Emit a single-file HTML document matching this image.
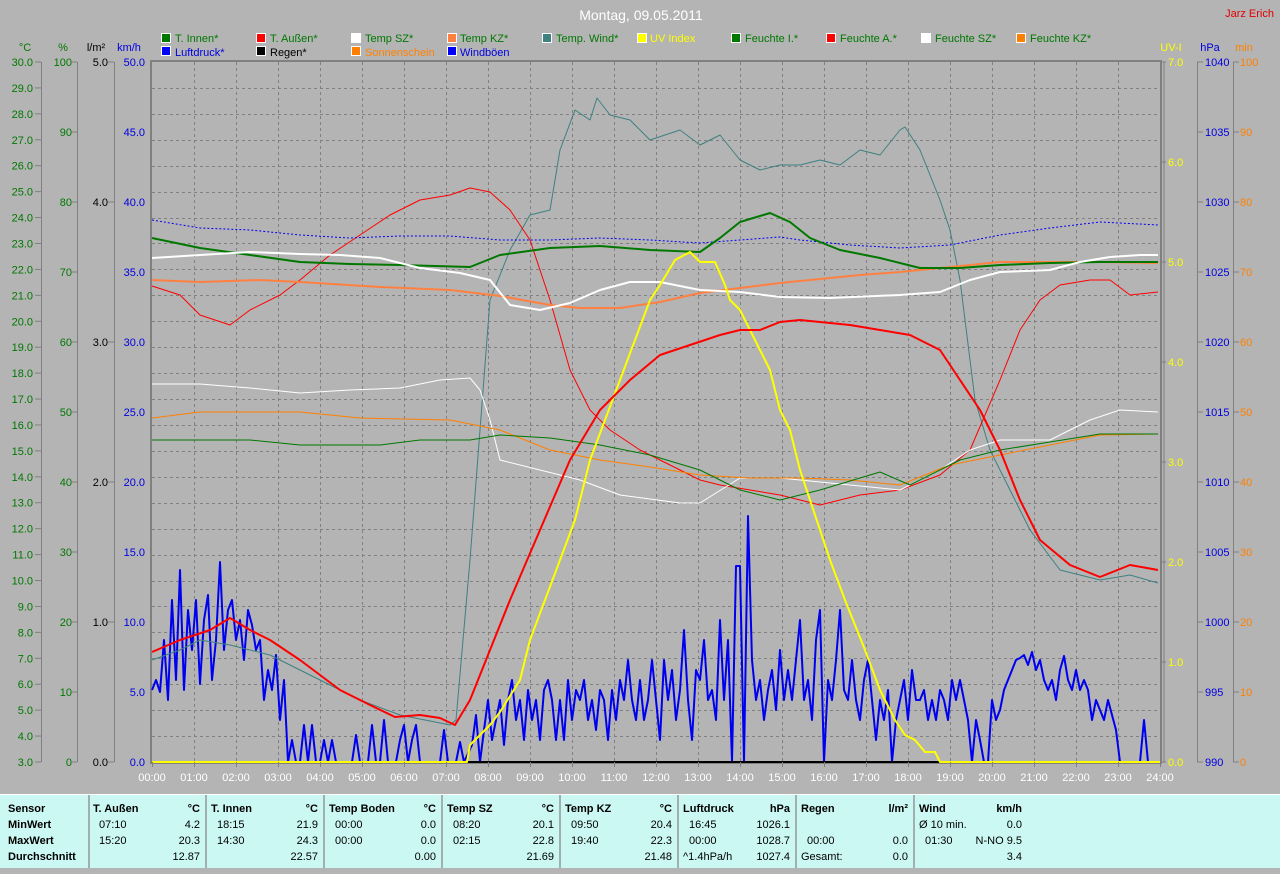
<!DOCTYPE html>
<html><head><meta charset="utf-8"><style>
body{margin:0;background:#b4b4b4;width:1280px;height:867px;overflow:hidden;font-family:"Liberation Sans",sans-serif}
svg{position:absolute;left:0;top:0}
svg text{font-family:"Liberation Sans",sans-serif;font-size:11px}
.tbl{position:absolute;left:0;top:794px;width:1280px;height:73px;background:#ccf8f4;border-top:1px solid #fff}
.c{position:absolute;top:0;height:73px;font-size:11px;line-height:16px;color:#000}
.c div{position:relative;height:16px}
.c .b{font-weight:bold}
.sep{position:absolute;top:0;width:2px;height:73px;background:#a0b0b0}
</style></head><body>
<svg width="1280" height="794" viewBox="0 0 1280 794">
<rect x="0" y="0" width="1280" height="794" fill="#b4b4b4"/>
<text x="641" y="20" fill="#fff" font-size="14" text-anchor="middle" style="font-size:14px">Montag, 09.05.2011</text>
<text x="1274" y="17" fill="#e00000" text-anchor="end">Jarz Erich</text>
<!-- legend -->
<g stroke="#fff" stroke-width="1">
<rect x="161.5" y="33.5" width="9" height="9" fill="#007800"/><rect x="256.5" y="33.5" width="9" height="9" fill="#f00"/><rect x="351.5" y="33.5" width="9" height="9" fill="#fff"/><rect x="447.5" y="33.5" width="9" height="9" fill="#ff8040"/><rect x="542.5" y="33.5" width="9" height="9" fill="#3f8080"/><rect x="637.5" y="33.5" width="9" height="9" fill="#ff0"/><rect x="731.5" y="33.5" width="9" height="9" fill="#007800"/><rect x="826.5" y="33.5" width="9" height="9" fill="#f00"/><rect x="921.5" y="33.5" width="9" height="9" fill="#fff"/><rect x="1016.5" y="33.5" width="9" height="9" fill="#ff8000"/>
<rect x="161.5" y="46.5" width="9" height="9" fill="#00f"/><rect x="256.5" y="46.5" width="9" height="9" fill="#000"/><rect x="351.5" y="46.5" width="9" height="9" fill="#ff8000"/><rect x="447.5" y="46.5" width="9" height="9" fill="#00f"/>
</g>
<g>
<text x="175" y="42" fill="#007800">T. Innen*</text><text x="270" y="42" fill="#007800">T. Außen*</text><text x="365" y="42" fill="#007800">Temp SZ*</text><text x="460" y="42" fill="#007800">Temp KZ*</text><text x="556" y="42" fill="#007800">Temp. Wind*</text><text x="650" y="42" fill="#ff0">UV Index</text><text x="745" y="42" fill="#007800">Feuchte I.*</text><text x="840" y="42" fill="#007800">Feuchte A.*</text><text x="935" y="42" fill="#007800">Feuchte SZ*</text><text x="1030" y="42" fill="#007800">Feuchte KZ*</text>
<text x="175" y="56" fill="#0000e0">Luftdruck*</text><text x="270" y="56" fill="#000">Regen*</text><text x="365" y="56" fill="#ff8000">Sonnenschein</text><text x="460" y="56" fill="#0000e0">Windböen</text>
</g>
<!-- units -->
<text x="25" y="51" fill="#007800" text-anchor="middle">°C</text><text x="63" y="51" fill="#007800" text-anchor="middle">%</text><text x="96" y="51" fill="#000" text-anchor="middle">l/m²</text><text x="129" y="51" fill="#0000e0" text-anchor="middle">km/h</text>
<text x="1171" y="51" fill="#ff0" text-anchor="middle">UV-I</text><text x="1210" y="51" fill="#0000e0" text-anchor="middle">hPa</text><text x="1244" y="51" fill="#ff8000" text-anchor="middle">min</text>
<!-- axis lines -->
<g stroke="#808080" stroke-width="1">
<line x1="41.5" y1="62" x2="41.5" y2="762"/><line x1="77.5" y1="62" x2="77.5" y2="762"/><line x1="114.5" y1="62" x2="114.5" y2="762"/>
<line x1="1197.5" y1="62" x2="1197.5" y2="762"/><line x1="1233.5" y1="62" x2="1233.5" y2="762"/>
</g>
<g id="grid" stroke="#808080" stroke-dasharray="3,3" stroke-width="1"></g>
<rect x="151" y="61" width="1010" height="702" fill="none" stroke="#808080" stroke-width="2"/>
<line x1="1164" y1="62" x2="1164" y2="762" stroke="#808080"/>
<g id="ax"></g>
<g fill="none" stroke-linejoin="round">
<polyline id="wind" stroke="#0000f0" stroke-width="2" points="152,690 156,680 160,692 164,640 168,700 172,600 176,680 180,570 184,690 188,610 192,650 196,600 200,684 204,620 208,595 212,680 216,640 220,562 224,650 228,610 232,600 236,640 240,620 244,660 248,610 252,625 256,650 260,640 264,700 268,670 272,690 276,655 280,720 284,680 288,762 292,740 296,762 300,762 304,725 308,762 312,725 316,762 320,762 324,740 328,762 332,740 336,762 352,762 356,735 360,762 368,762 372,725 376,762 380,762 384,720 388,762 396,762 400,740 404,725 408,762 412,740 416,725 420,762 440,762 444,730 448,762 456,762 460,742 464,762 472,745 476,715 480,762 484,730 488,700 492,740 496,720 500,700 504,745 508,700 512,680 516,720 520,700 524,740 528,690 532,720 536,700 540,740 544,690 548,680 552,700 556,740 560,700 564,740 568,680 572,720 576,690 580,700 584,680 588,720 592,700 596,730 600,690 604,700 608,740 612,690 616,720 620,680 624,700 628,660 632,700 636,720 640,680 644,720 648,700 652,660 656,700 660,740 664,660 668,700 672,670 676,720 680,690 684,630 688,700 692,740 696,670 700,680 704,640 708,700 712,690 716,720 720,620 724,700 728,640 732,762 736,566 740,566 744,762 748,516 752,660 756,700 760,680 764,720 768,690 772,670 776,710 780,650 784,700 788,670 792,700 796,660 800,620 804,700 808,680 812,720 816,640 820,610 824,762 828,680 832,700 836,660 840,610 844,690 848,700 852,660 856,700 860,720 864,680 868,660 872,700 876,740 880,700 884,720 888,690 892,762 896,720 900,700 904,680 908,720 912,670 916,700 920,700 924,690 928,720 932,700 936,720 940,690 944,700 948,720 952,680 956,700 960,680 964,700 968,720 972,762 976,720 980,740 984,762 988,762 992,700 996,720 1000,710 1004,690 1008,680 1012,670 1016,660 1020,658 1024,655 1028,665 1032,652 1036,670 1040,660 1044,680 1048,690 1052,680 1056,700 1060,670 1064,656 1068,680 1072,690 1076,670 1080,690 1084,680 1088,690 1092,720 1096,700 1100,710 1104,720 1108,700 1112,715 1116,730 1120,762 1140,762 1144,720 1148,762"/>
<polyline stroke="#000" stroke-width="2" points="460,762 1160,762"/>
<polyline stroke="#3f8080" stroke-width="1" points="152,660 180,650 200,640 230,645 270,655 320,680 360,700 400,715 450,725 456,720 470,560 490,300 510,250 530,215 550,210 560,150 575,110 590,120 597,98 610,115 630,120 650,140 665,135 680,130 700,145 720,135 740,160 760,170 780,165 800,165 820,160 840,165 860,150 880,155 900,130 905,127 920,150 940,200 950,230 960,280 975,400 990,450 1010,490 1030,530 1060,570 1100,580 1130,575 1158,583"/>
<polyline stroke="#f00" stroke-width="1" points="152,286 180,295 200,315 230,325 250,310 280,295 300,280 330,255 360,235 390,215 420,200 450,195 470,188 490,192 510,210 530,240 550,300 570,370 590,410 610,430 640,450 680,470 700,480 720,485 750,490 780,495 800,500 820,505 840,500 860,495 900,490 940,475 970,450 1000,380 1020,330 1040,300 1060,285 1090,280 1110,280 1130,295 1158,292"/>
<polyline stroke="#fff" stroke-width="1" points="152,384 200,384 250,388 300,393 350,390 400,388 440,380 470,378 480,390 490,420 500,460 540,470 580,480 620,495 680,503 700,503 740,478 780,478 800,480 850,485 900,490 940,470 970,450 1000,440 1050,440 1090,420 1120,410 1158,412"/>
<polyline stroke="#ff8000" stroke-width="1" points="152,418 200,412 300,412 360,418 450,420 500,430 550,450 600,460 650,467 700,475 750,478 800,478 850,480 900,485 950,465 1000,455 1050,445 1100,435 1158,434"/>
<polyline stroke="#007800" stroke-width="1" points="152,440 250,440 300,445 380,445 420,440 470,440 500,435 550,438 600,445 650,455 700,470 740,490 780,500 820,490 880,472 910,485 960,460 1000,450 1050,442 1100,434 1158,434"/>
<polyline stroke="#0000f0" stroke-width="1" stroke-dasharray="2,2" points="152,220 200,228 250,230 300,235 350,238 400,236 450,236 500,240 550,240 600,238 650,240 700,243 740,240 780,237 800,240 850,245 900,248 950,245 1000,235 1050,228 1100,222 1158,225"/>
<polyline stroke="#ff8040" stroke-width="2" points="152,280 200,282 260,280 300,282 380,287 450,290 500,296 550,305 580,308 620,308 660,302 700,293 740,288 780,283 820,279 860,275 900,272 960,266 1000,262 1060,262 1100,262 1158,263"/>
<polyline stroke="#007800" stroke-width="2" points="152,238 200,248 250,255 300,262 350,264 400,265 470,267 500,255 550,248 600,246 650,250 700,252 720,238 740,222 770,213 790,222 810,238 840,250 880,258 920,268 960,268 1000,265 1050,263 1100,262 1158,262"/>
<polyline stroke="#fff" stroke-width="2" points="152,258 200,255 250,252 300,254 340,255 380,258 420,268 460,273 490,280 510,305 540,310 570,303 600,290 630,282 660,282 700,290 740,292 780,297 830,298 900,295 940,292 970,280 1000,272 1050,270 1080,262 1110,257 1140,255 1158,255"/>
<polyline stroke="#ff0" stroke-width="2" points="152,762 467,762 470,745 490,725 500,712 520,680 530,640 545,600 560,560 575,520 590,460 605,420 620,380 635,340 650,300 660,285 675,260 690,252 700,262 715,262 725,285 730,300 740,310 750,330 760,350 770,370 780,410 790,430 800,470 810,500 820,530 830,560 845,600 855,625 865,650 880,690 895,720 905,735 915,740 925,752 935,752 940,762 1160,762"/>
<polyline stroke="#f00" stroke-width="2" points="152,652 180,640 210,630 230,618 250,630 270,640 300,660 340,690 370,705 395,717 420,715 440,718 455,725 470,700 490,650 510,600 540,530 570,460 600,410 630,380 660,355 690,345 720,335 740,330 760,330 780,322 800,320 820,322 850,325 880,330 910,335 940,350 960,380 980,410 1000,450 1020,500 1040,540 1070,565 1100,577 1130,565 1158,570"/>
</g>
<g id="times"></g>
</svg>
<div class="tbl">
<div class="sep" style="left:88px"></div><div class="sep" style="left:205px"></div><div class="sep" style="left:323px"></div><div class="sep" style="left:441px"></div><div class="sep" style="left:559px"></div><div class="sep" style="left:677px"></div><div class="sep" style="left:795px"></div><div class="sep" style="left:913px"></div>
<div class="c" style="left:8px;top:6px;width:80px"><div class="b">Sensor</div><div class="b">MinWert</div><div class="b">MaxWert</div><div class="b">Durchschnitt</div></div>
</div>
<script>
var s="http://www.w3.org/2000/svg";
function T(g,x,y,t,c,a){var e=document.createElementNS(s,"text");e.setAttribute("x",x);e.setAttribute("y",y);e.setAttribute("fill",c);if(a)e.setAttribute("text-anchor",a);e.textContent=t;g.appendChild(e);}
function L(g,x1,y1,x2,y2,c){var e=document.createElementNS(s,"line");e.setAttribute("x1",x1);e.setAttribute("y1",y1);e.setAttribute("x2",x2);e.setAttribute("y2",y2);if(c)e.setAttribute("stroke",c);g.appendChild(e);}
var g=document.getElementById("grid");
for(var i=1;i<24;i++){var x=152+i*42+.5;L(g,x,62,x,762);}
for(var i=1;i<27;i++){var y=Math.round(62+i*700/27)+.5;L(g,152,y,1160,y);}
var a=document.getElementById("ax");
for(var i=0;i<=27;i++){var y=62+i*700/27;T(a,33,y+4,(30-i).toFixed(1),"#007800","end");L(a,35,y,41,y,"#808080");}
for(var i=0;i<=10;i++){var y=62+i*70;T(a,72,y+4,String(100-i*10),"#007800","end");L(a,72,y,77,y,"#808080");
T(a,145,y+4,(50-i*5).toFixed(1),"#0000e0","end");
T(a,1205,y+4,String(1040-i*5),"#0000e0");L(a,1197,y,1203,y,"#808080");
T(a,1240,y+4,String(100-i*10),"#ff8000");L(a,1233,y,1239,y,"#808080");}
for(var i=0;i<=5;i++){var y=62+i*140;T(a,108,y+4,(5-i).toFixed(1),"#000","end");L(a,108,y,114,y,"#808080");}
for(var i=0;i<=7;i++){var y=62+i*100;T(a,1168,y+4,(7-i).toFixed(1),"#ff0");L(a,1160,y,1166,y,"#808080");}
var t=document.getElementById("times");
for(var i=0;i<=24;i++){T(t,152+i*42,781,(i<10?"0":"")+i+":00","#fff","middle");L(t,152+i*42+.5,762,152+i*42+.5,767,"#808080");}
var tb=document.querySelector(".tbl");
var cols=[
[93,200,"T. Außen","°C",["07:10","4.2"],["15:20","20.3"],["","12.87"]],
[211,318,"T. Innen","°C",["18:15","21.9"],["14:30","24.3"],["","22.57"]],
[329,436,"Temp Boden","°C",["00:00","0.0"],["00:00","0.0"],["","0.00"]],
[447,554,"Temp SZ","°C",["08:20","20.1"],["02:15","22.8"],["","21.69"]],
[565,672,"Temp KZ","°C",["09:50","20.4"],["19:40","22.3"],["","21.48"]],
[683,790,"Luftdruck","hPa",["16:45","1026.1"],["00:00","1028.7"],["^1.4hPa/h","1027.4"]],
[801,908,"Regen","l/m²",["",""],["00:00","0.0"],["Gesamt:","0.0"]],
[919,1022,"Wind","km/h",["Ø 10 min.","0.0"],["01:30","N-NO 9.5"],["","3.4"]]];
cols.forEach(function(c){var d=document.createElement("div");d.className="c";d.style.left=c[0]+"px";d.style.top="6px";d.style.width=(c[1]-c[0])+"px";
var h='<div class="b">'+c[2]+'<span style="position:absolute;right:0">'+c[3]+'</span></div>';
for(var k=4;k<7;k++){var p=c[k];var ind=(p[0].charAt(0)=="^"||p[0]=="Gesamt:"||p[0].charAt(0)=="Ø")?0:6;h+='<div><span style="position:absolute;left:'+ind+'px">'+p[0]+'</span><span style="position:absolute;right:0">'+p[1]+'</span></div>';}
d.innerHTML=h;tb.appendChild(d);});
</script>
</body></html>
